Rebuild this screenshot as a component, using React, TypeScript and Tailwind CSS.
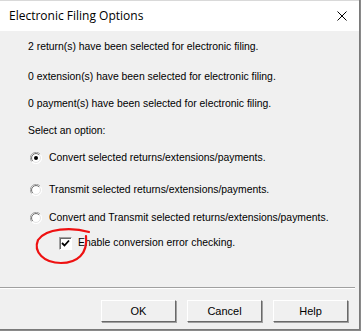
import React from 'react';

const body = { fontFamily: '"Liberation Sans", Arial, sans-serif' };

function Radio({ checked }: { checked?: boolean }) {
  return (
    <svg width="12" height="12" viewBox="0 0 12 12" className="shrink-0">
      <circle cx="6" cy="6" r="5.5" fill="#ffffff" />
      <path d="M10.3 2.3 A5.5 5.5 0 0 0 1.7 9.7" stroke="#a0a0a0" fill="none" />
      <path d="M9.2 2.9 A4.4 4.4 0 0 0 2.8 9.1" stroke="#696969" fill="none" />
      <path d="M1.7 9.7 A5.5 5.5 0 0 0 10.3 2.3" stroke="#ffffff" fill="none" />
      <path d="M2.8 9.1 A4.4 4.4 0 0 0 9.2 2.9" stroke="#e3e3e3" fill="none" />
      {checked && <circle cx="6" cy="6" r="2" fill="#000000" />}
    </svg>
  );
}

function Button({ label }: { label: string }) {
  return (
    <button className="w-[75px] h-[22px] bg-[#f0f0f0] border border-t-white border-l-white border-r-[#696969] border-b-[#696969] shadow-[1px_1px_0_#a0a0a0] text-[11px] text-black">
      {label}
    </button>
  );
}

export default function App() {
  return (
    <div className="relative w-[361px] h-[331px] bg-[#8a8a8a] overflow-hidden" style={body}>
      <div className="w-[360px] h-[330px] border-r border-b border-[#7a7a7a] bg-[#f0f0f0] flex flex-col">
        {/* Title bar */}
        <div className="h-[31px] bg-white flex items-center justify-between pl-[9px] pr-[12px] border-t border-[#d9d9d9] shrink-0">
          <span className="text-[12px] text-black" style={{ fontFamily: '"Open Sans", "Noto Sans", sans-serif' }}>
            Electronic Filing Options
          </span>
          <svg width="10" height="10" viewBox="0 0 10 10">
            <path d="M0.5 0.5 L9.5 9.5 M9.5 0.5 L0.5 9.5" stroke="#000" strokeWidth="1" />
          </svg>
        </div>

        {/* Content */}
        <div className="flex-1 flex flex-col text-[10.4px] text-black px-[28px] pt-[8px] whitespace-nowrap">
          <p className="h-[31px] leading-[13px] pt-[1px]">2 return(s) have been selected for electronic filing.</p>
          <p className="h-[27px] leading-[13px]">0 extension(s) have been selected for electronic filing.</p>
          <p className="h-[27px] leading-[13px]">0 payment(s) have been selected for electronic filing.</p>
          <p className="h-[24px] leading-[13px]">Select an option:</p>

          <div className="flex flex-col pl-[2px]">
            <label className="flex items-center gap-[7px] h-[20px]">
              <Radio checked />
              <span>Convert selected returns/extensions/payments.</span>
            </label>
            <label className="flex items-center gap-[7px] h-[20px] mt-[12px]">
              <Radio />
              <span>Transmit selected returns/extensions/payments.</span>
            </label>
            <label className="flex items-center gap-[7px] h-[20px] mt-[8px]">
              <Radio />
              <span>Convert and Transmit selected returns/extensions/payments.</span>
            </label>
            <label className="flex items-center gap-[6px] h-[20px] mt-[5px] pl-[29px]">
              <span className="w-[13px] h-[13px] bg-white border border-t-[#a0a0a0] border-l-[#a0a0a0] border-r-white border-b-white shadow-[inset_1px_1px_0_#696969] flex items-center justify-center">
                <svg width="9" height="9" viewBox="0 0 9 9">
                  <path d="M1 4 L3.5 6.5 L8 1.5" stroke="#000" strokeWidth="1.8" fill="none" />
                </svg>
              </span>
              <span>Enable conversion error checking.</span>
            </label>
          </div>
        </div>

        {/* Footer */}
        <div className="shrink-0">
          <div className="h-[2px] border-t border-[#a0a0a0] border-b border-b-white mr-[4px]" />
          <div className="flex justify-end gap-[11px] pr-[11px] pt-[11px] pb-[7px]">
            <Button label="OK" />
            <Button label="Cancel" />
            <Button label="Help" />
          </div>
        </div>
      </div>

      {/* hand-drawn annotation */}
      <svg className="absolute left-0 top-0 pointer-events-none" width="361" height="331" viewBox="0 0 361 331">
        <path
          d="M89 232 C72 227, 46 228, 38 240 C33 252, 44 263, 61 263 C77 263, 88 254, 86 236"
          stroke="#ee1111"
          strokeWidth="2.2"
          fill="none"
          strokeLinecap="round"
        />
      </svg>
    </div>
  );
}
